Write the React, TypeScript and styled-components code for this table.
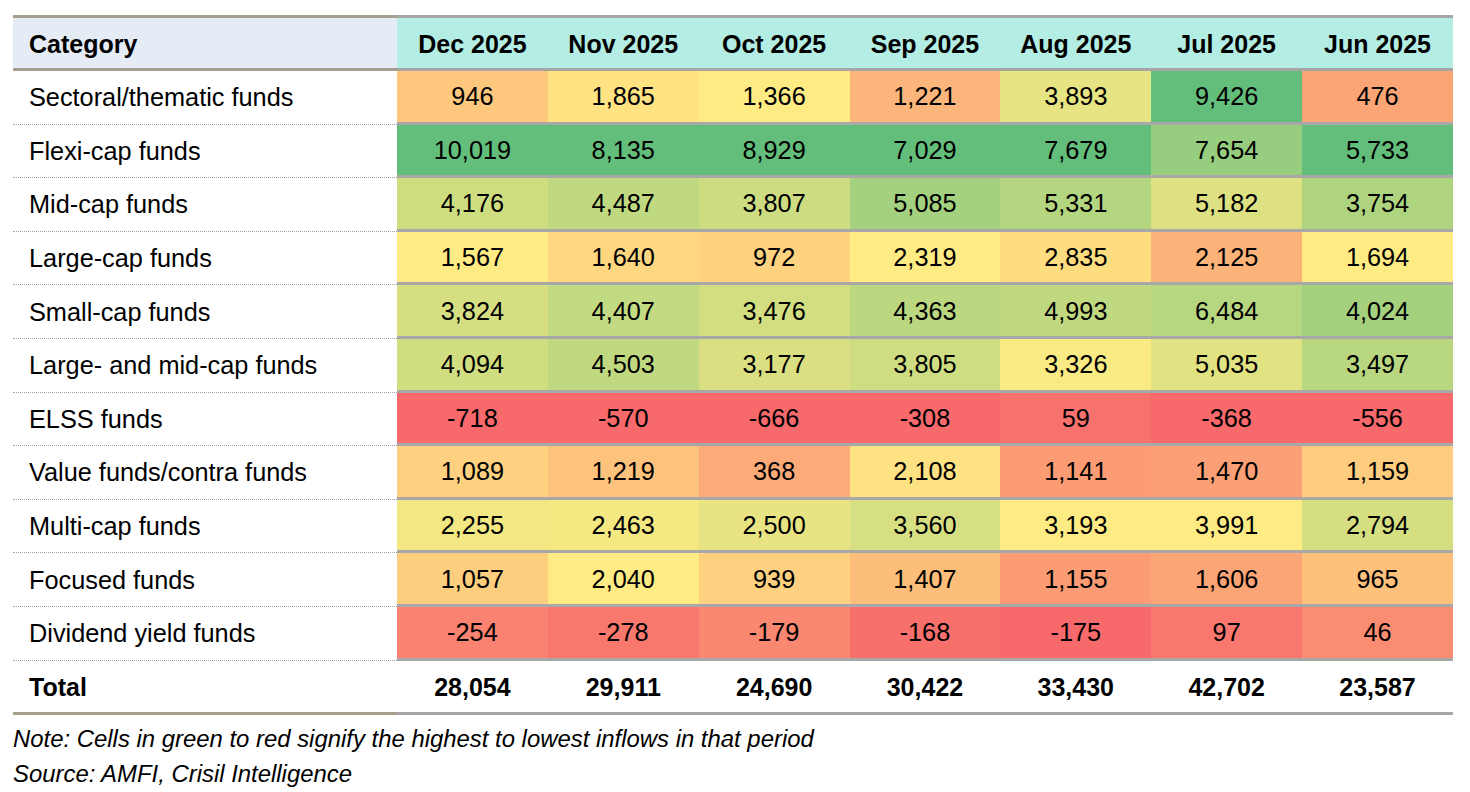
import styled, { createGlobalStyle } from "styled-components";

const GlobalStyle = createGlobalStyle`
  body {
    margin: 0;
    background: #ffffff;
    font-family: "Liberation Sans", Arial, sans-serif;
    color: #000000;
  }
`;

const MONTHS = [
  "Dec 2025",
  "Nov 2025",
  "Oct 2025",
  "Sep 2025",
  "Aug 2025",
  "Jul 2025",
  "Jun 2025",
];

const ROWS: { name: string; values: number[] }[] = [
  { name: "Sectoral/thematic funds", values: [946, 1865, 1366, 1221, 3893, 9426, 476] },
  { name: "Flexi-cap funds", values: [10019, 8135, 8929, 7029, 7679, 7654, 5733] },
  { name: "Mid-cap funds", values: [4176, 4487, 3807, 5085, 5331, 5182, 3754] },
  { name: "Large-cap funds", values: [1567, 1640, 972, 2319, 2835, 2125, 1694] },
  { name: "Small-cap funds", values: [3824, 4407, 3476, 4363, 4993, 6484, 4024] },
  { name: "Large- and mid-cap funds", values: [4094, 4503, 3177, 3805, 3326, 5035, 3497] },
  { name: "ELSS funds", values: [-718, -570, -666, -308, 59, -368, -556] },
  { name: "Value funds/contra funds", values: [1089, 1219, 368, 2108, 1141, 1470, 1159] },
  { name: "Multi-cap funds", values: [2255, 2463, 2500, 3560, 3193, 3991, 2794] },
  { name: "Focused funds", values: [1057, 2040, 939, 1407, 1155, 1606, 965] },
  { name: "Dividend yield funds", values: [-254, -278, -179, -168, -175, 97, 46] },
];

const TOTALS = [28054, 29911, 24690, 30422, 33430, 42702, 23587];

// excel style 3-colour scale: red (min) -> yellow (50th pct) -> green (max)
const RED = [248, 105, 107];
const YELLOW = [255, 235, 132];
const GREEN = [99, 190, 123];

const mix = (a: number[], b: number[], t: number) =>
  `rgb(${a.map((c, i) => Math.round(c + (b[i] - c) * t)).join(",")})`;

const columnColours = (col: number) => {
  const vals = ROWS.map((r) => r.values[col]);
  const sorted = [...vals].sort((a, b) => a - b);
  const min = sorted[0];
  const max = sorted[sorted.length - 1];
  const mid = sorted[Math.floor((sorted.length - 1) / 2)];
  return vals.map((v) =>
    v <= mid
      ? mix(RED, YELLOW, (v - min) / (mid - min || 1))
      : mix(YELLOW, GREEN, (v - mid) / (max - mid || 1))
  );
};

const COLOURS = MONTHS.map((_, i) => columnColours(i));

const fmt = (n: number) => n.toLocaleString("en-US");

const Page = styled.div`
  padding: 15px 0 0 13px;
`;

const Table = styled.table`
  width: 1440px;
  table-layout: fixed;
  border-collapse: separate;
  border-spacing: 0;
  font-size: 25.3px;
`;

const CategoryCol = styled.col`
  width: 384px;
`;

const HeadCell = styled.th<{ $first?: boolean }>`
  height: 47px;
  padding: 3px 0 0 ${(p) => (p.$first ? "16px" : "0")};
  text-align: ${(p) => (p.$first ? "left" : "center")};
  font-weight: bold;
  font-size: 25px;
  background: ${(p) => (p.$first ? "#e5ecf5" : "#b3ede3")};
  border-top: 3px solid ${(p) => (p.$first ? "#a79d8f" : "#a6a6a6")};
  border-bottom: 3px solid ${(p) => (p.$first ? "#a79d8f" : "#a6a6a6")};
`;

const NameCell = styled.td`
  height: 49.6px;
  padding: 1px 0 0 16px;
  text-align: left;
  border-bottom: 1px dotted #a3a3a3;
`;

const ValueCell = styled.td<{ $bg: string }>`
  height: 49.6px;
  padding: 1px 0 0;
  text-align: center;
  background: ${(p) => p.$bg};
  border-bottom: 3px solid #a8a8a8;
`;

const TotalCell = styled.td<{ $first?: boolean }>`
  height: 49.5px;
  padding: 2px 0 0 ${(p) => (p.$first ? "16px" : "0")};
  text-align: ${(p) => (p.$first ? "left" : "center")};
  font-weight: bold;
  font-size: 25px;
  border-bottom: 3px solid ${(p) => (p.$first ? "#a79d8f" : "#a6a6a6")};
`;

const Notes = styled.div`
  padding-top: 10px;
  display: flex;
  flex-direction: column;
  gap: 8px;
  font-size: 23.9px;
  font-style: italic;
  line-height: 27px;
`;

const App = () => {
  return (
    <Page>
      <GlobalStyle />
      <Table>
        <colgroup>
          <CategoryCol />
          {MONTHS.map((m) => (
            <col key={m} />
          ))}
        </colgroup>
        <thead>
          <tr>
            <HeadCell $first>Category</HeadCell>
            {MONTHS.map((m) => (
              <HeadCell key={m}>{m}</HeadCell>
            ))}
          </tr>
        </thead>
        <tbody>
          {ROWS.map((row, r) => (
            <tr key={row.name}>
              <NameCell>{row.name}</NameCell>
              {row.values.map((v, c) => (
                <ValueCell key={c} $bg={COLOURS[c][r]}>
                  {fmt(v)}
                </ValueCell>
              ))}
            </tr>
          ))}
          <tr>
            <TotalCell $first>Total</TotalCell>
            {TOTALS.map((t, i) => (
              <TotalCell key={i}>{fmt(t)}</TotalCell>
            ))}
          </tr>
        </tbody>
      </Table>
      <Notes>
        <span>Note: Cells in green to red signify the highest to lowest inflows in that period</span>
        <span>Source: AMFI, Crisil Intelligence</span>
      </Notes>
    </Page>
  );
};

export default App;
